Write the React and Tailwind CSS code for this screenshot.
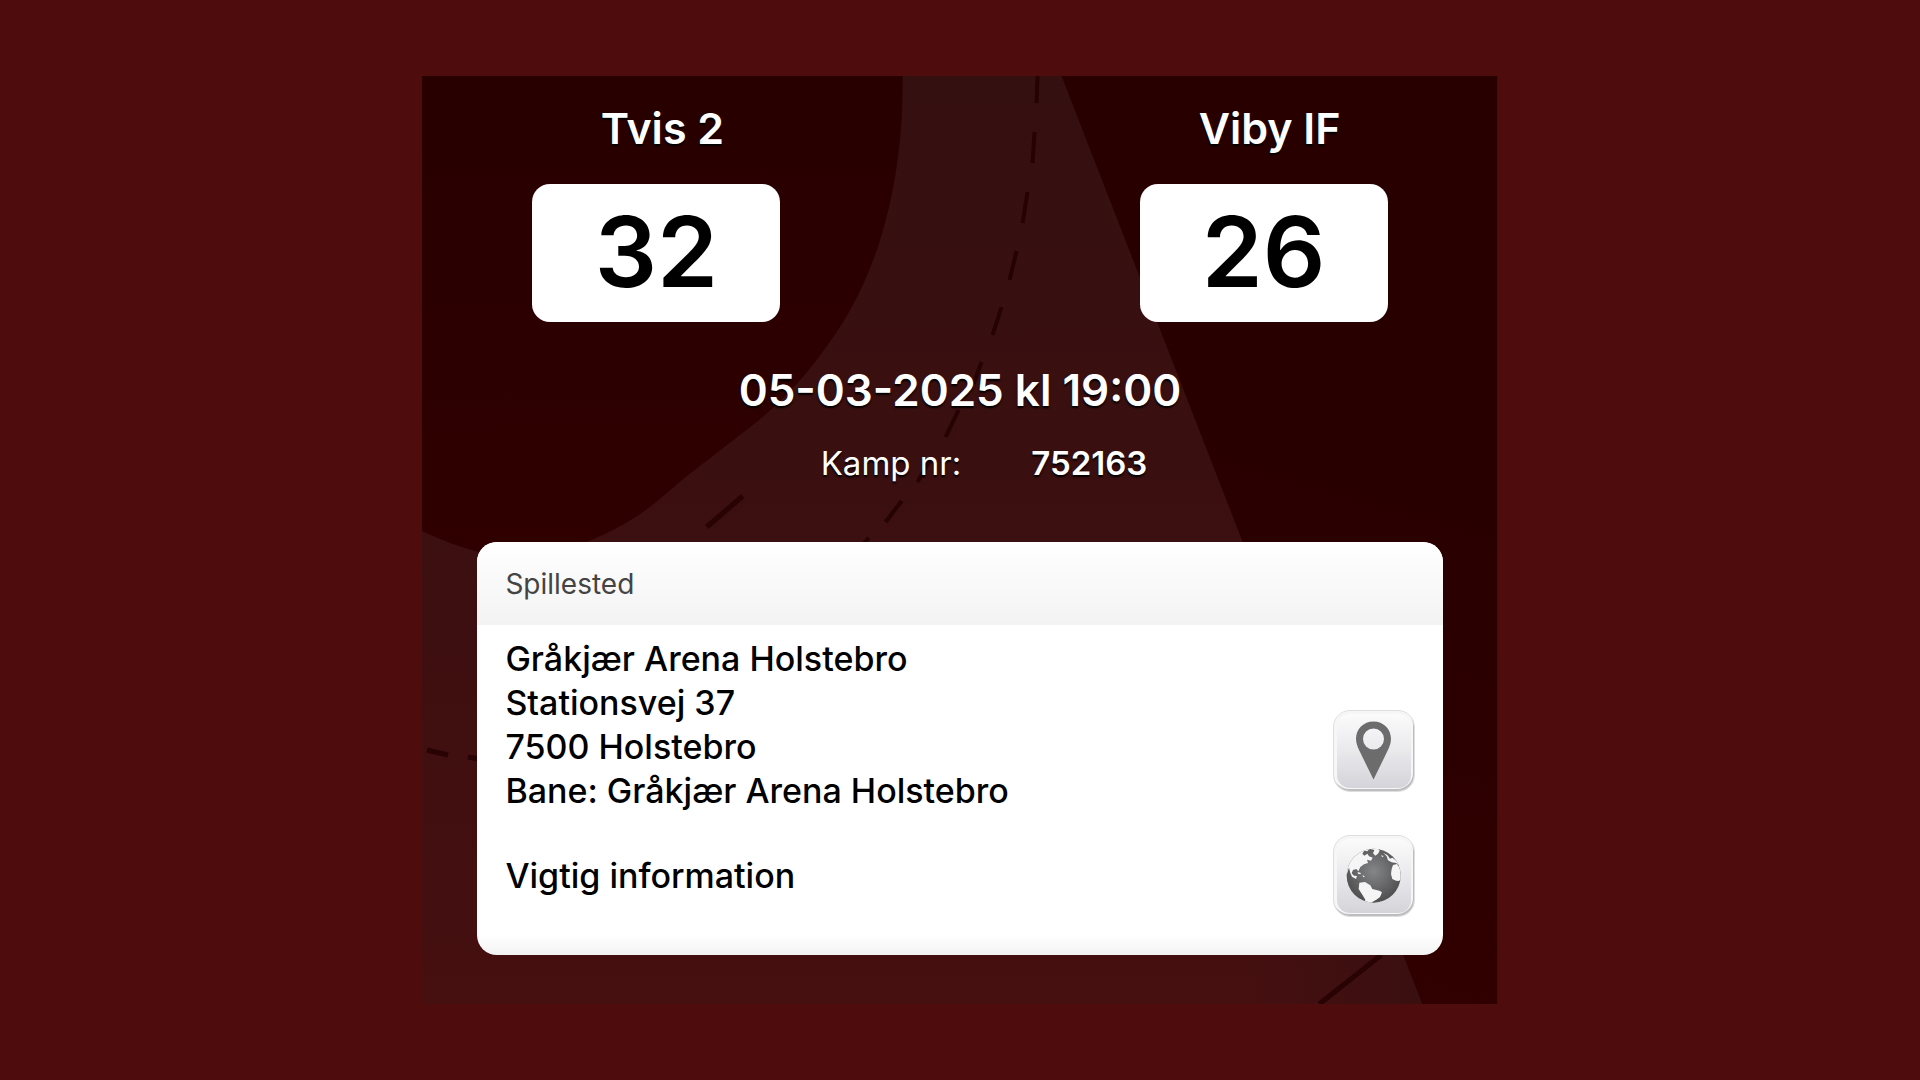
import React from "react";

function CourtBackdrop() {
  return (
    <svg
      className="absolute inset-0 h-full w-full"
      viewBox="422 76 1076 928"
      preserveAspectRatio="none"
      aria-hidden="true"
    >
      <defs>
        <linearGradient id="court" x1="0" y1="0" x2="0" y2="1">
          <stop offset="0" stopColor="#351010" />
          <stop offset="0.4" stopColor="#3a0f10" />
          <stop offset="1" stopColor="#460f10" />
        </linearGradient>
        <linearGradient id="shade" gradientUnits="userSpaceOnUse" x1="0" y1="76" x2="0" y2="560">
          <stop offset="0" stopColor="#280000" />
          <stop offset="1" stopColor="#300000" />
        </linearGradient>
        <linearGradient id="side" gradientUnits="userSpaceOnUse" x1="1400" y1="400" x2="1240" y2="960">
          <stop offset="0" stopColor="#280000" />
          <stop offset="1" stopColor="#310000" />
        </linearGradient>
        <linearGradient id="corner" gradientUnits="userSpaceOnUse" x1="1250" y1="0" x2="1423" y2="0">
          <stop offset="0" stopColor="#3a0f10" stopOpacity="0" />
          <stop offset="1" stopColor="#3a0f10" />
        </linearGradient>
      </defs>
      <rect x="422" y="76" width="1076" height="928" fill="url(#court)" />
      <path d="M1200 900H1423V1004H1200Z" fill="url(#corner)" />
      <path
        d="M422 76H903C904 140 894 200 878 248C864 288 848 318 828 345C808 374 784 400 757 422L686 477C666 494 650 508 636 517C590 546 540 560 505 557C475 553 447 543 422 531Z"
        fill="url(#shade)"
      />
      <path d="M1062 76H1498V1004H1423Z" fill="url(#side)" />
      <g stroke="#260203" strokeWidth="4" fill="none">
        <path d="M1038 76L1037 103M1035 132L1033 163M1028 192L1023 223M1017 251L1010 280M1002 307L993 335M982 362L974 384M959 410L946 437M930 461L918 482M902 501L886 522M869 538L860 548" />
      </g>
      <g stroke="#290204" strokeWidth="5" fill="none">
        <path d="M743 496L707 527M1382 955L1320 1004" />
        <path d="M427 750L448 755M468 757L490 761" />
      </g>
    </svg>
  );
}

function Team({ name, score }) {
  return (
    <section className="flex w-[248px] flex-col gap-[30px]">
      <h2 className="pl-3 text-center text-[43px] leading-[52px] font-semibold text-shadow-[0_2px_2px_#000000]">
        {name}
      </h2>
      <p className="rounded-[18px] bg-white pt-[19px] pb-[21px] text-center text-[98px] leading-[98px] font-semibold text-black">
        {score}
      </p>
    </section>
  );
}

function IconButton({ label, children }) {
  return (
    <button
      type="button"
      aria-label={label}
      className="size-[82px] shrink-0 cursor-pointer rounded-[17px] border border-[#dedede] bg-linear-to-b from-[#fdfdfd] via-[#e9e8eb] to-[#d3d2d8] shadow-[inset_-1px_-2px_0_#bdbdbf,inset_0_0_0_3px_#f6f6f6]"
    >
      {children}
    </button>
  );
}

function PinIcon() {
  return (
    <svg viewBox="0 0 80 80" className="size-full" aria-hidden="true">
      <path
        fillRule="evenodd"
        fill="#6c6c6c"
        d="M39.5 10.500C29.500 10.500 22 18 22 28C22 33 24.500 38 27 43L39.500 68.500L52 43C54.500 38 57 33 57 28C57 18 49.500 10.500 39.500 10.500ZM39.500 17.500A10.500 10.500 0 1 1 39.500 38.500A10.500 10.500 0 1 1 39.500 17.500Z"
      />
    </svg>
  );
}

function GlobeIcon() {
  return (
    <svg viewBox="43 31 240 240" className="size-full" aria-hidden="true">
      <defs>
        <radialGradient id="ocean" cx="0.5" cy="0.42" r="0.55">
          <stop offset="0" stopColor="#858688" />
          <stop offset="1" stopColor="#515152" />
        </radialGradient>
        <clipPath id="globe">
          <circle cx="162" cy="150" r="81" />
        </clipPath>
      </defs>
      <circle cx="162" cy="150" r="81" fill="url(#ocean)" />
      <g clipPath="url(#globe)" fill="#f5f5f5">
        <path d="M80 60H142L150 69L143 77L134 75L128 84L134 90L143 84L148 92L159 96L154 105L142 102L145 112L133 116L122 124L116 137L110 130L100 133L96 143L103 150L112 151L109 160L97 153L92 142L88 126L80 150Z" />
        <path d="M149 69L164 73L160 83L167 90L175 84L180 75L174 66L160 64Z" />
        <path d="M114 139L124 142L122 146L115 144ZM128 149L136 152L131 155Z" />
        <path d="M119 171L136 169L152 179L158 190L179 195L187 200L181 214L170 222L158 229L150 238H132L137 222L128 207L117 190Z" />
        <path d="M191 82L203 88L211 99L218 96L230 105L240 120L229 112L216 110L205 104L201 92Z" />
        <path d="M220 118L232 115L240 126L246 160L237 166L229 165L218 160L214 145L216 130Z" />
        <path d="M184 89L192 91L188 95Z" />
      </g>
    </svg>
  );
}

export default function App() {
  return (
    <main className="flex min-h-screen items-center justify-center bg-[#4e0c0d] font-['Inter','Liberation_Sans',sans-serif] text-white">
      <article className="relative w-[56%] min-w-[760px] overflow-hidden">
        <CourtBackdrop />
        <div className="relative px-[55px] pt-[26px] pb-[49px]">
          <div className="flex justify-between px-[55px]">
            <Team name="Tvis 2" score="32" />
            <Team name="Viby IF" score="26" />
          </div>

          <p className="mt-[42px] text-center text-[44px] leading-[52px] font-semibold text-shadow-[0_2px_2px_#000000]">
            05-03-2025 kl 19:00
          </p>
          <dl className="mt-[27px] flex justify-center gap-[70px] pl-12 text-[33px] leading-10 text-shadow-[0_2px_2px_#000000]">
            <dt>Kamp nr:</dt>
            <dd className="font-semibold">752163</dd>
          </dl>

          <section className="mt-[59px] overflow-hidden rounded-[20px] bg-white bg-linear-to-t from-[#f3f3f3] to-white to-[20px] text-[34px] leading-[44px] font-medium text-black">
            <h3 className="bg-linear-to-b from-white to-[#f3f3f3] px-7 pt-5 pb-[19px] text-[28px] font-normal text-[#444444]">
              Spillested
            </h3>
            <div className="flex flex-col gap-[22px] px-7 pt-3 pb-[38px]">
              <div className="flex items-end justify-between">
                <address className="not-italic">
                  Gråkjær Arena Holstebro
                  <br />
                  Stationsvej 37
                  <br />
                  7500 Holstebro
                  <br />
                  Bane: Gråkjær Arena Holstebro
                </address>
                <div className="flex pb-[21px]">
                  <IconButton label="Vis på kort">
                    <PinIcon />
                  </IconButton>
                </div>
              </div>
              <div className="flex items-center justify-between">
                <p>Vigtig information</p>
                <IconButton label="Åbn hjemmeside">
                  <GlobeIcon />
                </IconButton>
              </div>
            </div>
          </section>
        </div>
      </article>
    </main>
  );
}
